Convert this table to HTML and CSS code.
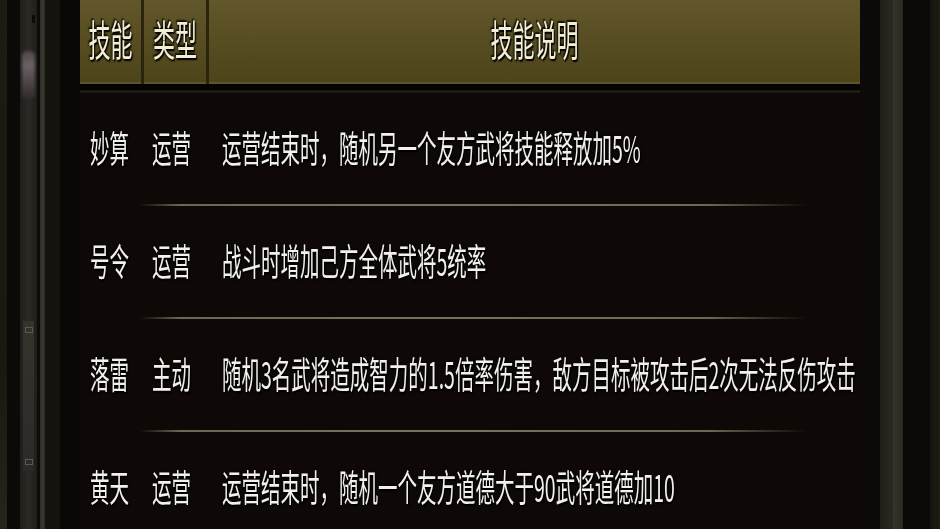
FILE: index.html
```html
<!DOCTYPE html>
<html lang="zh">
<head>
<meta charset="utf-8">
<title>技能说明</title>
<link rel="stylesheet" href="styles.css">
</head>
<body>
<div class="screen">
  <div class="frame frame-left">
    <div class="s s1"></div>
    <div class="s s2"></div>
    <div class="s s3">
      <div class="tick"></div>
      <div class="orn"></div>
      <div class="gap"></div>
      <div class="slot"><span class="mk"></span><span class="mk"></span></div>
    </div>
    <div class="s s4"></div>
    <div class="s s5"></div>
    <div class="s s6"></div>
    <div class="s s7"></div>
  </div>

  <div class="table">
    <div class="head">
      <div class="hc c1"><span class="t">技能</span></div>
      <div class="hc c2"><span class="t">类型</span></div>
      <div class="hc c3"><span class="t">技能说明</span></div>
    </div>
    <div class="head-line"></div>

    <div class="row">
      <div class="cells">
        <div class="cell n"><span class="t">妙算</span></div>
        <div class="cell k"><span class="t">运营</span></div>
        <div class="cell d"><span class="t">运营结束时，随机另一个友方武将技能释放加5%</span></div>
      </div>
      <div class="sep"></div>
    </div>
    <div class="row">
      <div class="cells">
        <div class="cell n"><span class="t">号令</span></div>
        <div class="cell k"><span class="t">运营</span></div>
        <div class="cell d"><span class="t">战斗时增加己方全体武将5统率</span></div>
      </div>
      <div class="sep"></div>
    </div>
    <div class="row">
      <div class="cells">
        <div class="cell n"><span class="t">落雷</span></div>
        <div class="cell k"><span class="t">主动</span></div>
        <div class="cell d"><span class="t">随机3名武将造成智力的1.5倍率伤害，敌方目标被攻击后2次无法反伤攻击</span></div>
      </div>
      <div class="sep"></div>
    </div>
    <div class="row">
      <div class="cells">
        <div class="cell n"><span class="t">黄天</span></div>
        <div class="cell k"><span class="t">运营</span></div>
        <div class="cell d"><span class="t">运营结束时，随机一个友方道德大于90武将道德加10</span></div>
      </div>
    </div>
  </div>

  <div class="frame frame-right">
    <div class="s r1"></div>
    <div class="s r2"></div>
    <div class="s r3"></div>
    <div class="s r4"></div>
    <div class="s r5"></div>
  </div>
</div>
</body>
</html>
```

FILE: styles.css
```css
html, body {
  margin: 0;
  padding: 0;
  overflow: hidden;
  background: #0b0806;
}

.screen {
  width: 940px;
  height: 529px;
  display: flex;
  overflow: hidden;
  font-family: "Noto Sans CJK SC", "Noto Sans", sans-serif;
  background: #0d0907;
}

/* ---------- side frames ---------- */
.frame {
  display: flex;
  width: 80px;
  flex: none;
}
.s { height: 100%; }
.s1 { width: 7px;  background: linear-gradient(#1d1c12, #1a1910 70%, #26251a); }
.s2 { width: 13px; background: #0c0a08; }
.s3 {
  width: 17px;
  background: linear-gradient(90deg, #1f1e1a, #2b2a25 50%, #1f1e1a);
  display: flex;
  flex-direction: column;
  align-items: center;
}
.s4 { width: 3px;  background: #0e0c09; }
.s5 { width: 5px;  background: linear-gradient(90deg, #2c2b24, #3b3a31, #2c2b24); }
.s6 { width: 15px; background: #15130e; }
.s7 { width: 20px; background: #0a0806; }

.tick {
  margin-top: 15px;
  margin-left: 10px;
  width: 3px;
  height: 8px;
  background: #0c0b09;
}
.orn {
  margin-top: 28px;
  width: 13px;
  height: 48px;
  border-radius: 5px 5px 3px 3px;
  background: linear-gradient(#4d4648, #6b6166 30%, #4d4547 65%, #302a28);
  filter: blur(1.5px);
}
.gap { height: 222px; }
.slot {
  width: 11px;
  height: 150px;
  background: linear-gradient(#34332e, #2b2a26);
  display: flex;
  flex-direction: column;
  justify-content: space-between;
  align-items: center;
  padding: 6px 0;
  box-sizing: border-box;
}
.mk {
  width: 6px;
  height: 4px;
  border: 1px solid #5a5952;
}

.r1 { width: 20px; background: #0c0a08; }
.r2 { width: 13px; background: linear-gradient(90deg, #1f1e19, #2a2922); }
.r3 { width: 10px; background: linear-gradient(90deg, #35342b, #2a2922); }
.r4 { width: 27px; background: #0b0907; }
.r5 { width: 10px; background: linear-gradient(90deg, #15140d, #1e1d12); }

/* ---------- table ---------- */
.table {
  width: 780px;
  flex: none;
  display: flex;
  flex-direction: column;
  background: #0e0907;
}

.t {
  display: inline-block;
  white-space: nowrap;
  transform: scaleY(1.9);
}

.head {
  flex: none;
  height: 84px;
  display: grid;
  grid-template-columns: 64px 65px 1fr;
  background: linear-gradient(#62572a, #4c4319);
  box-shadow: inset 0 -2px 0 #5c5431;
}
.hc {
  display: flex;
  align-items: center;
  justify-content: center;
  padding-bottom: 11px;
  font-size: 22px;
  line-height: 22px;
  color: #f2eed6;
  text-shadow: 0 0 2px #000, 1px 1px 1px #000, -1px -1px 1px #1a1608;
}
.hc.c1, .hc.c2 { border-right: 3px solid #2b2510; }

.head-line {
  flex: none;
  height: 9px;
  background: linear-gradient(#050403 0, #050403 6px, #26231c 7px, #26231c 8px, #0e0907 9px);
}

.row {
  flex: none;
  height: 113px;
  display: flex;
  flex-direction: column;
}
.cells {
  flex: 1;
  display: grid;
  grid-template-columns: 64px 65px 1fr;
  align-items: start;
  padding-top: 45px;
}
.cell {
  font-size: 19.5px;
  line-height: 20px;
  color: #f1f0ea;
  text-shadow: 0 0 2px #000, 1px 1px 1px #000;
}
.cell.n { padding-left: 10px; }
.cell.k { padding-left: 8px; }
.cell.d { padding-left: 13px; }

.sep {
  flex: none;
  height: 2px;
  margin-left: 60px;
  width: 667px;
  background: linear-gradient(90deg, rgba(90, 87, 70, 0), #6a6754 6%, #77735e 40%, #6c6955 85%, rgba(90, 87, 70, 0));
}
```
